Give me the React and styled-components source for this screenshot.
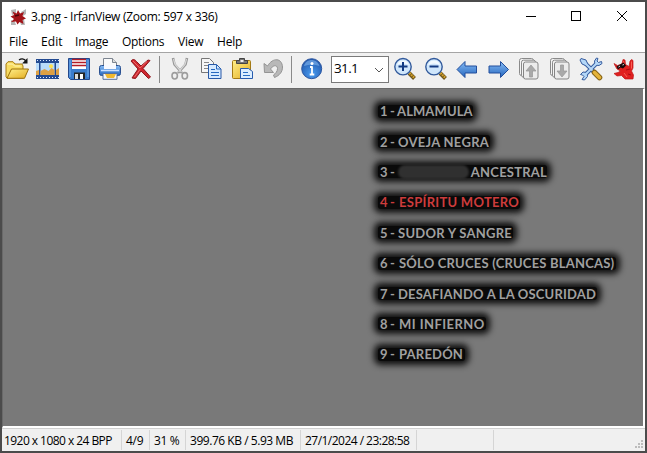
import React from "react";
import styled, { createGlobalStyle } from "styled-components";

const GlobalStyle = createGlobalStyle`
  * { box-sizing: border-box; }
  body { margin: 0; overflow: hidden; }
`;

const Window = styled.div`
  width: 647px;
  height: 453px;
  display: flex;
  flex-direction: column;
  border: 2px solid #4b4b4b;
  background: #fff;
  color: #000;
  font-family: "Open Sans", "Noto Sans", sans-serif;
  font-size: 12px;
`;

const TitleBar = styled.header`
  height: 29px;
  flex: none;
  display: flex;
  align-items: center;
`;

const AppIcon = styled.svg`
  width: 16px;
  height: 16px;
  margin: 0 5px 0 8px;
  flex: none;
`;

const Label = styled.span`
  white-space: pre;
  letter-spacing: ${(p) => p.$track || 0}px;
`;

const Controls = styled.svg`
  width: 138px;
  height: 29px;
  margin: 0 2px 0 auto;
`;

const MenuBar = styled.nav`
  height: 21px;
  flex: none;
  display: flex;
  align-items: center;
`;

const MenuItem = styled.span`
  width: ${(p) => p.$w}px;
  padding-left: 7px;
  white-space: nowrap;
  letter-spacing: ${(p) => p.$track || 0}px;
`;

const ToolBar = styled.div`
  height: 36px;
  flex: none;
  display: flex;
  align-items: flex-start;
  padding: 4px 0 0 3px;
  border-top: 1px solid #a5a5a5;
  background: #f0f0f0;
`;

const ToolIcon = styled.svg`
  width: 24px;
  height: 24px;
  margin-right: 7px;
  flex: none;
`;

const Separator = styled.div`
  width: 1px;
  height: 27px;
  margin: -1px 8px 0 -1px;
  background: #8a8a8a;
`;

const ZoomBox = styled.div`
  width: 58px;
  height: 27px;
  margin: -1px 4px 0 0;
  padding: 0 4px 4px 2px;
  display: flex;
  align-items: center;
  justify-content: space-between;
  flex: none;
  border: 1px solid #7a7a7a;
  background: #fff;
  font: 13.5px "Open Sans", sans-serif;
`;

const Chevron = styled.svg`
  width: 10px;
  height: 6px;
  margin-top: 5px;
`;

const Viewer = styled.main`
  height: 340px;
  flex: none;
  padding: 7px 0 0 375px;
  border: solid;
  border-width: 1px 2px 2px 1px;
  border-color: #696969 #fff #fff #696969;
  background: #797979;
`;

const Track = styled.div`
  height: 30.4px;
  display: flex;
  align-items: center;
`;

const TrackGlow = styled.div`
  width: ${(p) => p.$w}px;
  height: 13px;
  padding-left: 2px;
  display: flex;
  align-items: center;
  border-radius: 3px;
  background: #0a0a0a;
  box-shadow: 0 0 6px 4px #101010;
  color: ${(p) => (p.$current ? "#cd3c3c" : "#a0a0a0")};
  font: 700 13px Lato, sans-serif;
  white-space: pre;
`;

const TrackNo = styled.span`
  width: ${(p) => p.$w}px;
  flex: none;
  letter-spacing: -0.3px;
`;

const Smudge = styled.span`
  width: 71px;
  height: 14px;
  margin-right: 2px;
  border-radius: 7px;
  background: #303030;
  filter: blur(1.3px);
`;

const StatusBar = styled.footer`
  flex: 1;
  display: flex;
  border-top: 1px solid #d0d0d0;
  background: #f0f0f0;
`;

const StatusCell = styled.div`
  width: ${(p) => p.$w}px;
  height: 20px;
  margin-top: 1px;
  padding: 0 0 0 ${(p) => p.$pad ?? 4}px;
  display: flex;
  align-items: center;
  flex: none;
  border-right: 1px solid #d5d5d5;
  white-space: nowrap;
  letter-spacing: ${(p) => p.$track || 0}px;
`;

const Grip = styled.svg`
  width: 10px;
  height: 10px;
  margin: auto 0 1px auto;
`;

const Splat = () => (
  <>
    <path
      d="M3 6.500 6.500 8.500 11 7 12 2.500 14 3 14.500 7.500 18 9.500 19 4 20.500 2.500 22 3.500 22 11 20.500 14 22.500 18 22 22H14L10.500 18.500 6 19 3 16.500 7 15.500 9.500 14 6 12 4.500 9.500Z"
      fill="#e0201f"
      stroke="#bd1517"
      strokeWidth=".7"
      strokeLinejoin="round"
    />
    <path d="m12.500 4 .5 4m7.500-3.500v7M13 16l3 4" stroke="#f86155" fill="none" />
    <path d="m15 13 4-1m-2 5 3 1" stroke="#a80c12" fill="none" />
    <path d="m5.500 9.500 7-4 2.500 3-3 3-2.500-1-2.500 2Z" fill="#17090b" />
    <path d="m7.500 10 1.500-1m2.500-1 1.500-.5" stroke="#ddd" />
  </>
);

const Magnifier = ({ plus }) => (
  <>
    <path d="m16 16 5.500 5.500" stroke="#70571d" strokeWidth="4" />
    <path d="m16.500 16 5 5" stroke="#d9a62e" strokeWidth="2.2" strokeDasharray="1.6 .8" />
    <circle cx="10" cy="9.7" r="8.2" fill="#cfe6fb" stroke="#31599b" strokeWidth="1.4" />
    <path d="M4 8a6.3 6.3 0 0 1 12 0c-4-2-8-2-12 0" fill="#f2faff" />
    <path d={plus ? "M5.500 9.500h9M10 5v9" : "M5.500 9.500h9"} stroke="#123a82" strokeWidth="2" />
  </>
);

const Arrow = () => (
  <path d="M2 12.500 10 4.500v4.500h11.500v7H10v4.500Z" fill="url(#blue)" stroke="#234e9c" strokeLinejoin="round" />
);

const Pages = ({ down }) => (
  <>
    <rect x="2.5" y="1.5" width="14" height="17" rx="2" fill="#f4f4f4" stroke="#8a8a8a" />
    <rect x="4.5" y="3.2" width="14" height="17" rx="2" fill="#f4f4f4" stroke="#8a8a8a" />
    <rect x="6.5" y="5" width="14.5" height="17" rx="2" fill="#ececec" stroke="#858585" />
    <path
      d={down ? "M12.500 8h3v6h3.500l-5 6-5-6h3.500Z" : "M12.500 20h3v-6h3.500l-5-6-5 6h3.500Z"}
      fill="#a9a9a9"
      stroke="#979797"
      strokeWidth=".7"
    />
  </>
);

const ICONS = {
  open: (
    <>
      <path d="M1 20V7l2-2.300h5L10 7h7l1 2v12H2Z" fill="#f8dc62" stroke="#a87d12" />
      <path d="M2 21.300 6.500 12h17L19.500 21.300Z" fill="url(#gold)" stroke="#9b7009" strokeLinejoin="round" />
      <path d="M2.500 7h5l2 2h6" stroke="#fff5b5" fill="none" />
      <path d="M14 3c2-1.500 5-1.500 7 1" stroke="#151515" strokeWidth="1.3" fill="none" />
      <path d="M22.500 1v5.500h-5.500Z" fill="#151515" />
    </>
  ),
  film: (
    <>
      <path d="M0 2h23V22H0Z" fill="#234a91" />
      <path d="M1 3.500h22M1 20.500h22" stroke="#dce9ff" strokeWidth="1" strokeDasharray="1 2" />
      <path d="M0 6h3v12H0zM4.500 6h14v12h-14zM20 6h3v12h-3z" fill="#b9dcfb" />
      <path d="m0 14 3-1v5H0zM4.500 14l4-2 4 2 3-3 3 2v5h-14zM20 13l3-2v7h-3z" fill="#dda044" />
      <circle cx="15" cy="9.3" r="2" fill="#ffe14d" />
    </>
  ),
  save: (
    <>
      <path d="M1.500 1.500h21v21h-19l-2-2Z" fill="#3b7ccc" stroke="#23488c" />
      <path d="M3 3v17M21 3v17" stroke="#75aeed" />
      <path d="M5 2h14v10H5Z" fill="#fff" />
      <path d="M5 2.500h14M5 5.500h14M5 8.500h14" stroke="#b31c26" strokeWidth="1.3" />
      <path d="M7 15.500h11v6.500H7Z" fill="#252525" />
      <path d="M13 17h3v5h-3Z" fill="#fff" />
      <path d="M8 17h3v5H8Z" fill="#ddd" />
    </>
  ),
  print: (
    <>
      <path d="M5.500 12V1.500h9l4 4V12Z" fill="#fafafa" stroke="#7d8590" />
      <path d="M14.500 1.500v4h4" fill="#ddd" stroke="#7d8590" />
      <rect x="1.5" y="8.500" width="21" height="10" rx="2" fill="url(#blue)" stroke="#2b5191" />
      <path d="M6 8h12v4H6Z" fill="#f7f9ff" />
      <path d="M3 13.500h18" stroke="#cbe0ff" strokeWidth="1.5" />
      <path d="M5 16.500h14v5.800H5Z" fill="#f5f7fa" stroke="#55709d" />
      <path d="M7 17h11l-2 4H9Z" fill="#f0b930" />
    </>
  ),
  remove: (
    <>
      <path
        d="M2 4c2-2.500 4-1.500 5.500.5L12 9l7-6 2 .5L14 11.500 21.500 20l-2 1.500L12 14 6.500 21.500 3 21l6-9Z"
        fill="#cf2730"
        stroke="#8d171d"
      />
      <path d="m4 4 7 7 7-6.500M11 12.500l-5.500 7.500" stroke="#ee6b68" fill="none" />
    </>
  ),
  cut: (
    <>
      <path d="m5 1 1.500 6.500L14 16M19 1l-1.500 6.500L10 16" stroke="#979797" strokeWidth="2.600" fill="none" />
      <path d="m5.500 2 1.500 5.500 6.500 7.500M18.500 2l-1.500 5.500-6.500 7.500" stroke="#d8d8d8" strokeWidth="1.2" fill="none" />
      <ellipse cx="6.700" cy="18.800" rx="2.700" ry="3.200" fill="none" stroke="#9d9d9d" strokeWidth="1.6" />
      <ellipse cx="16.800" cy="18.800" rx="2.700" ry="3.200" fill="none" stroke="#9d9d9d" strokeWidth="1.6" />
    </>
  ),
  copy: (
    <>
      <path d="M2.500 1.500h8l4 4v10h-12Z" fill="#f6f6f6" stroke="#777" />
      <path d="M5 5.500h5M5 8.500h7M5 11.500h6" stroke="#888" />
      <path d="M9.500 7.500h8l4.500 4.500v9.500H9.500Z" fill="#d6eaff" stroke="#2859a7" />
      <path d="M17.500 7.500V12H22M12 12.500h4M12 15.500h8M12 18.500h8" stroke="#2869be" fill="none" />
    </>
  ),
  paste: (
    <>
      <rect x="2.5" y="3.5" width="18" height="18" rx="1" fill="url(#gold)" stroke="#a47a14" />
      <path d="M6.500 6.500V3.500h3V1.500h5v2h3v3Z" fill="#777" stroke="#444" />
      <path d="M10.500 3h3v2h-3Z" fill="#eee" />
      <path d="M10.500 11.500h8l4 3v7h-12Z" fill="#dceeff" stroke="#275cae" />
      <path d="M13 15.500h5M13 18.500h7" stroke="#2b70c4" />
    </>
  ),
  undo: (
    <path
      d="m3 6.500.5 9h9L9.500 12c3-4.500 7-4 7-.5 0 3-2 5-4 6.500l1 2.500c5-2 8-5.500 8-10.500C21 1 12 0 6.500 9Z"
      fill="#b8b8b8"
      stroke="#949494"
    />
  ),
  info: (
    <>
      <circle cx="11.700" cy="11.700" r="10" fill="url(#orb)" stroke="#2b55a0" />
      <path d="M4 9c2-8 13-8 15.500 0-5-2-10-2-15.500 0" fill="#8dbff4" opacity=".55" />
      <circle cx="12" cy="6.500" r="1.500" fill="#fff" />
      <path d="M12 9.500v8M10 10h2.500M9.700 17.500h4.600" stroke="#fff" strokeWidth="1.8" />
    </>
  ),
  zoomIn: <Magnifier plus />,
  zoomOut: <Magnifier />,
  prev: <Arrow />,
  next: <g transform="translate(24.500 0) scale(-1 1)"><Arrow /></g>,
  pageUp: <Pages />,
  pageDown: <Pages down />,
  tools: (
    <>
      <path d="m6 6 9 9M18 6 6 18" stroke="#365c9f" strokeWidth="4" />
      <path
        d="M2 1.500 7 3l1.500 3.500L6.500 8.500 3 7 1 3ZM17.500 1 15.500 4l.5 4 4 .5L23 6.500l-.5-2-3 1-1.500-1.500 1-2.500ZM1.500 17.500 4 15l4 .5.5 4-3 3.500-2.500-.5 2-3-1.500-1.500Z"
        fill="#b4d7f8"
        stroke="#365c9f"
      />
      <path d="m5 5 10 10M18 6 6 18" stroke="#b4d7f8" strokeWidth="2" />
      <path d="m15.500 15.500 5 5" stroke="#876416" strokeWidth="5.500" strokeLinecap="round" />
      <path d="m15.500 15.500 5 5" stroke="#e5b43b" strokeWidth="3.500" strokeLinecap="round" />
    </>
  ),
  irfan: <g transform="translate(1 0)"><Splat /></g>,
};

const TOOLS = [
  "open", "film", "save", "print", "remove", "|",
  "cut", "copy", "paste", "undo", "|",
  "info", "zoom", "zoomIn", "zoomOut", "prev", "next", "pageUp", "pageDown", "tools", "irfan",
];

const MENUS = [
  ["File", 32], ["Edit", 34, 0.1], ["Image", 47, -0.2], ["Options", 56, -0.3], ["View", 39, -0.2], ["Help", 40, -0.2],
];

const TRACKS = [
  { no: "1 -", name: "ALMAMULA", w: 95, gap: 17, track: 0.1 },
  { no: "2 -", name: "OVEJA NEGRA", w: 112, gap: 18, track: 0.28 },
  { no: "3 -", name: "ANCESTRAL", w: 169, gap: 18, track: 0.22, hidden: true },
  { no: "4 -", name: "ESPÍRITU MOTERO", w: 142, gap: 19, track: 0.28, current: true },
  { no: "5 -", name: "SUDOR Y SANGRE", w: 135, gap: 18, track: 0.25 },
  { no: "6 -", name: "SÓLO CRUCES (CRUCES BLANCAS)", w: 238, gap: 19, track: 0.21 },
  { no: "7 -", name: "DESAFIANDO A LA OSCURIDAD", w: 219, gap: 18, track: 0.18 },
  { no: "8 -", name: "MI INFIERNO", w: 108, gap: 19, track: 0.45 },
  { no: "9 -", name: "PAREDÓN", w: 87, gap: 19, track: 0.2 },
];

const Gradients = () => (
  <defs>
    <linearGradient id="blue" x1="0" y1="0" x2="0" y2="1">
      <stop offset="0" stopColor="#86bcf5" />
      <stop offset="1" stopColor="#2465bd" />
    </linearGradient>
    <linearGradient id="gold" x1="0" y1="0" x2="1" y2="1">
      <stop offset="0" stopColor="#fff08b" />
      <stop offset="1" stopColor="#e4ad20" />
    </linearGradient>
    <radialGradient id="orb" cx=".5" cy=".75" r=".7">
      <stop offset="0" stopColor="#4a9cf0" />
      <stop offset="1" stopColor="#2259ad" />
    </radialGradient>
  </defs>
);

function Tool({ name }) {
  if (name === "|") return <Separator />;
  if (name === "zoom") {
    return (
      <ZoomBox>
        <Label $track={-0.65}>31.1</Label>
        <Chevron viewBox="0 0 10 6"><path d="m1 1 4 4 4-4" fill="none" stroke="#555" /></Chevron>
      </ZoomBox>
    );
  }
  return <ToolIcon viewBox="0 0 24 24">{name === "open" && <Gradients />}{ICONS[name]}</ToolIcon>;
}

export default function App() {
  return (
    <>
      <GlobalStyle />
      <Window>
        <TitleBar>
          <AppIcon viewBox="0 0 16 16">
            <path d="M1 1 6 0v4L2 6ZM11 3l5-3v5l-3 2ZM1 11l4 2 1 3H1ZM10 12l4-2 1 6h-4Z" fill="#b5b5b5" />
            <path
              d="m2.500 2.500 4 2L8 1l2 3.500 4-1.500-1.500 4L16 9.500l-3.500 1.500 1 4-4-2-2 2.500L6 12.500l-5 .5 3-3L.5 7.500 4 6Z"
              fill="#a31318"
            />
            <path d="m5 7 4-1" stroke="#4b0609" strokeWidth="1.500" />
          </AppIcon>
          <Label $track={-0.28}>3.png - IrfanView (Zoom: 597 x 336)</Label>
          <Controls viewBox="0 0 138 29" shapeRendering="crispEdges">
            <path d="M21 14.500h10" stroke="#000" />
            <path d="M66.500 9.500h9v9h-9Z" fill="none" stroke="#000" />
            <path d="m112 9 10 10m0-10-10 10" stroke="#000" shapeRendering="auto" />
          </Controls>
        </TitleBar>
        <MenuBar>
          {MENUS.map(([name, w, track]) => <MenuItem key={name} $w={w} $track={track}>{name}</MenuItem>)}
        </MenuBar>
        <ToolBar>{TOOLS.map((name, i) => <Tool key={i} name={name} />)}</ToolBar>
        <Viewer>
          {TRACKS.map((t) => (
            <Track key={t.no}>
              <TrackGlow $w={t.w} $current={t.current}>
                <TrackNo $w={t.gap}>{t.no}</TrackNo>
                {t.hidden && <Smudge />}
                <Label $track={t.track}>{t.name}</Label>
              </TrackGlow>
            </Track>
          ))}
        </Viewer>
        <StatusBar>
          <StatusCell $w={120} $pad={2} $track={-0.55}>1920 x 1080 x 24 BPP</StatusCell>
          <StatusCell $w={28} $track={-0.3}>4/9</StatusCell>
          <StatusCell $w={36} $track={-0.4}>31 %</StatusCell>
          <StatusCell $w={115} $track={-0.46}>399.76 KB / 5.93 MB</StatusCell>
          <StatusCell $w={116} $track={-0.53}>27/1/2024 / 23:28:58</StatusCell>
          <StatusCell $w={77} />
          <Grip viewBox="0 0 10 10">
            <path d="M6 0h2v2H6zM3 3h2v2H3zM6 3h2v2H6zM0 6h2v2H0zM3 6h2v2H3zM6 6h2v2H6z" fill="#bcbcbc" />
          </Grip>
        </StatusBar>
      </Window>
    </>
  );
}
